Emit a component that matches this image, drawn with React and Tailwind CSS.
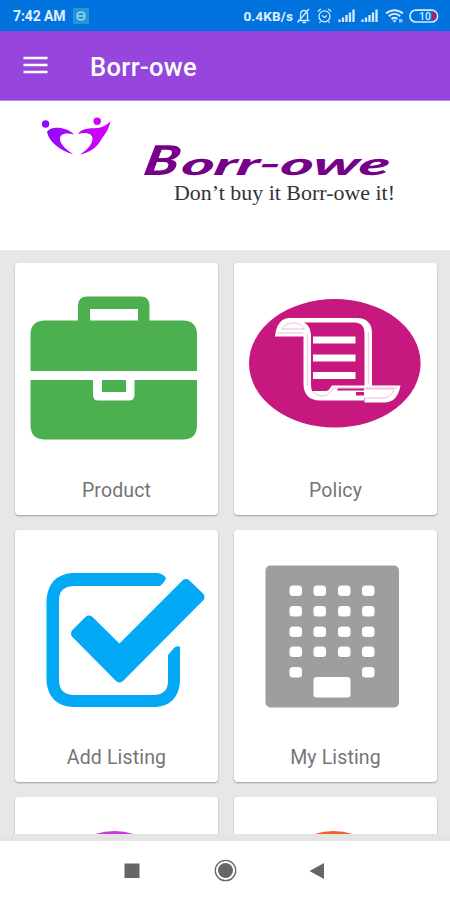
import React from "react";

function StatusIcons() {
  return (
    <svg className="h-[31px] w-[145px] shrink-0" viewBox="295 0 145 31" fill="none" stroke="#d5e9ff" strokeWidth="1.3">
      {/* muted bell */}
      <path d="M298 20.500h11.500M300.500 20v-5c0-3 1.500-4.500 3.500-4.500s3.500 1.500 3.500 4.500v5M302.500 22.500h3.500M297.500 22.500L309 9" />
      {/* alarm clock */}
      <circle cx="324.500" cy="16.300" r="5.500" />
      <path d="M317.800 11.500l3-2.500M331.200 11.500l-3-2.500M322 15.500l2.500 2 2.500-2M320.500 21.500l-1 1.500M328.500 21.500l1 1.500" />
      {/* mobile signals */}
      <path strokeWidth="2.300" d="M339.500 22v-2.500M343 22v-4.500M346.500 22v-7M350 22v-9.500M353.500 22v-12.500" />
      <path strokeWidth="2.300" d="M362.500 22v-2.500M366 22v-4.500M369.500 22v-7M373 22v-9.500M376.500 22v-12.500" />
      {/* wifi */}
      <path strokeWidth="2" d="M386 13.500c5-4.500 12-4.500 17 0M388.700 16.300c3.500-3 8-3 11.500 0M391.500 19c2-1.500 4-1.500 6 0" />
      <path fill="#d5e9ff" stroke="none" d="M392.500 20.300h4l-2 2.400z" />
      <path fill="#8fc3f5" stroke="none" d="M399 19h3.500v3.500H399z" />
      {/* battery */}
      <rect x="410" y="10.200" width="27.500" height="11.800" rx="5.800" strokeWidth="1.700" />
      <path stroke="none" fill="#a9207c" d="M432 12.300h1.500a3 3 0 0 1 3 3.800 3 3 0 0 1-3 3.900H432z" />
      <text x="419" y="20" fontFamily="Roboto, sans-serif" fontSize="10.500" fontWeight="500" fill="#d5e9ff" stroke="none">10</text>
    </svg>
  );
}

function Banner() {
  return (
    <svg className="block h-[150px] w-full" viewBox="0 100 450 150">
      <defs>
        <linearGradient id="heart" x1="42" x2="110" y1="0" y2="0" gradientUnits="userSpaceOnUse">
          <stop offset="0" stopColor="#8a0cff" />
          <stop offset="1" stopColor="#d800f5" />
        </linearGradient>
      </defs>
      <g fill="url(#heart)">
        <circle cx="45.600" cy="123" r="3.700" />
        <circle cx="97.200" cy="120.200" r="3.700" />
        <path d="M47 131C50 125 66 125 74 133.500C65 131 59.500 133 60 138.500C60.500 144 67 149 73.500 153.500C60 149.500 49 141 47 131Z" />
        <path d="M78 133C82 127 90 127.500 97 127C103 126.500 107 124 110.500 120C109 129 104 134 101 139C97 147 89 151.500 80 153.500C87 149 92 144 92.500 138C93 132.500 86 130.500 78 133Z" />
      </g>
      <g transform="translate(0 174) skewX(-12)" fontFamily="Lato, sans-serif" fontWeight="900" fontStyle="italic" fill="#760087">
        <text x="142" y="0" fontSize="41" textLength="35" lengthAdjust="spacingAndGlyphs">B</text>
        <text x="180" y="0" fontSize="31" textLength="208" lengthAdjust="spacingAndGlyphs">orr-owe</text>
      </g>
      <text x="174" y="199" fontSize="20" textLength="221" lengthAdjust="spacingAndGlyphs" fontFamily="'Liberation Serif', serif" fill="#333">
        Don’t buy it Borr-owe it!
      </text>
    </svg>
  );
}

function ProductIcon() {
  return (
    <svg className="block h-[205px] w-full" viewBox="15 263 203 205">
      <path fill="#4caf50" fillRule="evenodd" d="M30.500 371V335Q30.500 320.500 45 320.500H78V306Q78 296.500 87 296.500H141Q149.500 296.500 149.500 306V320.500H183Q197 320.500 197 335V371ZM90 320.500H138V309H90Z" />
      <path fill="#4caf50" d="M30.500 380H93V395Q93 400.500 98.500 400.500H129Q134.500 400.500 134.500 395V380H197V425Q197 439.500 183 439.500H45Q30.500 439.500 30.500 425Z" />
      <path fill="#4caf50" d="M102 380h24v12h-24z" />
    </svg>
  );
}

function PolicyIcon() {
  return (
    <svg className="block h-[205px] w-full" viewBox="234 263 203 205">
      <ellipse cx="334.800" cy="363.300" rx="85.800" ry="64.300" fill="#c6187f" />
      <path fill="#fff" d="M275 336.500C276 325 281 318 290 318H357C367 318 372 324 372 333V386H364.500V334C364.500 326 361 322.500 354 322.500H304C309 325 311 330 311 337V384C311 391 313 395.500 321 395.500H364V400.500H320C309 400.500 303.500 394 303.500 384V336.500Z" />
      <path fill="#fff" d="M332 385.500H400.500C398.500 396 394 402.500 384 402.500H364.500V398H313V391H326C329 391 330 388 332 385.500Z" />
      <path fill="none" stroke="#f0b8da" strokeWidth="1" d="M282 329C286 321 302 321 304 329ZM277 333H303M307.300 334V386M368.300 332V384M312 391C320 399 329 397 333 388H397M365 398H382C390 398 393 393 394 389H366" />
      <path fill="#c6187f" d="M338 388.500H364V390.500H337zM356 392H364V395.500H356z" />
      <path fill="#fff" d="M313 336.500h42.500v7H313zM313 354.500h42.500v7H313zM313 372h42.500v7H313z" />
    </svg>
  );
}

function AddListingIcon() {
  return (
    <svg className="block h-[205px] w-full" viewBox="15 530 203 205">
      <path fill="#03a9f4" d="M72 573H157Q163 573.500 166 578Q165 582 160 586H73Q59 587 59 600V680Q59 694 73 695H155Q168 694 168 681V655L174 648Q177 645 180 647V682Q178 705 156 707H72Q49 705 46.500 682V599Q49 575 72 573Z" />
      <path fill="#03a9f4" stroke="#03a9f4" strokeWidth="10" strokeLinejoin="round" d="M89 620.500L76 633.500L119.500 677.500L199.500 597L186 584L119.500 650.500Z" />
    </svg>
  );
}

const WINDOW_ROWS = [585.5, 606, 626.5, 646.5, 667];
const WINDOW_COLUMNS = [289.5, 313.5, 338, 362];

function MyListingIcon() {
  return (
    <svg className="block h-[205px] w-full" viewBox="234 530 203 205">
      <rect x="265.500" y="565.500" width="133.500" height="142" rx="5" fill="#9e9e9e" />
      {WINDOW_ROWS.map((y, row) =>
        WINDOW_COLUMNS.filter((_, column) => row < 4 || column === 0 || column === 3).map((x) => (
          <rect key={`${x}-${y}`} x={x} y={y} width="12.500" height="10.500" rx="3.500" fill="#fff" />
        ))
      )}
      <rect x="313.500" y="677" width="37" height="20.500" rx="3" fill="#fff" />
    </svg>
  );
}

function Card({ label, children }) {
  return (
    <div className="h-[252px] rounded-[4px] bg-white text-center shadow-[0_1px_2px_rgba(0,0,0,0.32)]">
      {children}
      <div className="h-6 text-[19.5px] leading-[46px] tracking-[0.15px] text-[#757575]">{label}</div>
    </div>
  );
}

function PartialIcon({ color }) {
  return (
    <svg className="block h-[205px] w-full" viewBox="0 0 203 205">
      <ellipse cx="99.500" cy="84" rx="56" ry="50" fill={color} />
    </svg>
  );
}

export default function App() {
  return (
    <div className="flex h-[900px] w-[450px] flex-col overflow-hidden bg-white font-[Roboto,sans-serif]">
      <div className="flex h-[31px] shrink-0 items-center bg-[#0073df] pl-[13px] pr-[10px] text-[#e2f0ff]">
        <span className="pt-px text-[14px] font-bold tracking-[-0.1px]">7:42 AM</span>
        <svg className="ml-[8px] h-[16px] w-[16px]" viewBox="0 0 17 17">
          <rect width="17" height="17" fill="#2495d5" />
          <rect x="4.500" y="4.500" width="8" height="8" rx="3.500" fill="none" stroke="#b9def2" strokeWidth="1.300" />
          <path d="M5 8.500h7" stroke="#b9def2" strokeWidth="1.300" />
        </svg>
        <span className="ml-auto mr-[2px] pt-px text-[13.5px] font-bold tracking-[0.15px]">0.4KB/s</span>
        <StatusIcons />
      </div>
      <header className="flex h-[70px] shrink-0 items-center bg-[#9646dc] pl-[23px] text-white">
        <svg className="-mt-[2px] h-[18px] w-[25px]" viewBox="0 0 25 18">
          <path d="M.5 2h24M.5 9h24M.5 16h24" stroke="#fff" strokeWidth="2.600" />
        </svg>
        <h1 className="ml-[42px] pt-[3px] text-[25.5px] font-medium leading-[67px] tracking-[0.35px]">Borr-owe</h1>
      </header>
      <div className="-mt-px h-[150px] shrink-0 border-t border-[#bd8be8] bg-white">
        <Banner />
      </div>
      <main className="h-[584px] shrink-0 overflow-hidden bg-[#e7e7e7] pl-[15px] pr-[13px] pt-[13px]">
        <div className="grid grid-cols-2 gap-x-[16px] gap-y-[15px]">
          <Card label="Product"><ProductIcon /></Card>
          <Card label="Policy"><PolicyIcon /></Card>
          <Card label="Add Listing"><AddListingIcon /></Card>
          <Card label="My Listing"><MyListingIcon /></Card>
          <Card label=""><PartialIcon color="#ce37e0" /></Card>
          <Card label=""><PartialIcon color="#f4602a" /></Card>
        </div>
      </main>
      <div className="h-[7px] shrink-0 bg-[#e4e4e4]" />
      <nav className="flex h-[59px] shrink-0 bg-white">
        <svg className="h-[59px] w-full" viewBox="0 841 450 59" fill="#666">
          <path d="M124.500 863.500h15v14.500h-15zM324 863v16l-14.500-8z" />
          <circle cx="225.500" cy="870.500" r="7.500" />
          <circle cx="225.500" cy="870.500" r="10.200" fill="none" stroke="#666" strokeWidth="1.300" />
        </svg>
      </nav>
    </div>
  );
}
